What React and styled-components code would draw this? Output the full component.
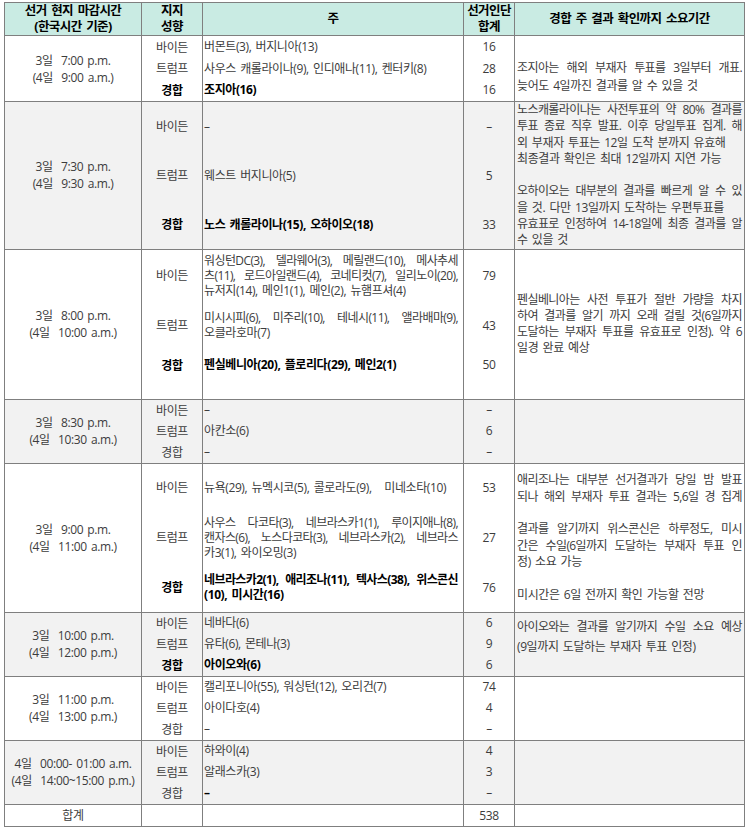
import React from "react";
import styled, { createGlobalStyle } from "styled-components";

/*Election-night closing-time table: one group per poll-closing slot, each
  split into Biden / Trump / swing sub-rows, with a merged note column.*/

const LINE = "#7f7f7f";
const SHADE = "#f2f2f2";
const HEAD = "#c9ebe3";
const TEXT = "#3c3c3c";

const GlobalStyle = createGlobalStyle`
    body {
        margin: 0;
        background: #fff;
        font-family: "Open Sans", "Noto Sans CJK KR", sans-serif;
        color: ${TEXT};
    }
`;

const Page = styled.div`
    padding: 2px 0 0 4px;
`;

//latin glyphs come from Open Sans, hangul from Noto Sans CJK KR
const Table = styled.table`
    border-collapse: collapse;
    table-layout: fixed;
    width: 740px;
    font-family: "Open Sans", "Noto Sans CJK KR", sans-serif;
    font-size: 12px;
    letter-spacing: -0.4px;
    word-spacing: 1.5px;
`;

const HeadCell = styled.th`
    background: ${HEAD};
    border: 1px solid ${LINE};
    height: 31px;
    padding: 0;
    font-size: 12.5px;
    font-weight: 700;
    color: #000;
    line-height: 16px;
    letter-spacing: -0.6px;
    word-spacing: 2px;
    text-align: center;
    vertical-align: middle;
`;

const Row = styled.tr`
    height: ${props => props.$h}px;
    background: ${props => props.$shade ? SHADE : "#fff"};
`;

/*merged cells (time + note) carry the full group border*/
const GroupCell = styled.td`
    border: 1px solid ${LINE};
    padding: ${props => props.$pad || "0 2px"};
    vertical-align: ${props => props.$valign || "middle"};
`;

const TimeCell = styled(GroupCell)`
    text-align: center;
    line-height: 17px;
    white-space: pre;
`;

const NoteCell = styled(GroupCell)`
    line-height: ${props => props.$lh || 16.3}px;
`;

/*each source line is its own block; full lines are spread edge to edge
  (tighter natural spacing so they never overflow before justifying)*/
const TextLine = styled.div`
    text-align: justify;
    text-align-last: ${props => props.$fill ? "justify" : "left"};
    letter-spacing: ${props => props.$fill ? "-0.6px" : "inherit"};
    word-spacing: ${props => props.$fill ? "0" : "inherit"};
    white-space: pre;
`;

/*sub-row cells: only the group's outer edges get horizontal rules*/
const SubCell = styled.td`
    border-left: 1px solid ${LINE};
    border-right: 1px solid ${LINE};
    border-top: ${props => props.$first ? `1px solid ${LINE}` : "none"};
    border-bottom: ${props => props.$last ? `1px solid ${LINE}` : "none"};
    padding: 0 1px ${props => props.$lift || 0}px;
    vertical-align: middle;
    font-weight: ${props => props.$bold ? 700 : 400};
    color: ${props => props.$bold ? "#000" : TEXT};
`;

const SideCell = styled(SubCell)`
    text-align: center;
`;

const StateCell = styled(SubCell)`
    text-align: left;
    line-height: 15px;
    padding-right: 5px;
`;

const VoteCell = styled(SubCell)`
    text-align: center;
`;

const GROUPS = [
    {
        time: ["3일  7:00 p.m.", "(4일  9:00 a.m.)"],
        shade: false,
        rows: [
            { h: 22, side: "바이든", states: ["버몬트(3), 버지니아(13)"], votes: "16" },
            { h: 21, side: "트럼프", states: ["사우스 캐롤라이나(9), 인디애나(11), 켄터키(8)"], votes: "28" },
            { h: 23, side: "경합", bold: true, states: ["조지아(16)"], votes: "16" },
        ],
        note: {
            lh: 17.5, pad: "16px 2px 0",
            lines: [["조지아는 해외 부재자 투표를 3일부터 개표.", true], ["늦어도 4일까진 결과를 알 수 있을 것"]],
        },
    },
    {
        time: ["3일  7:30 p.m.", "(4일  9:30 a.m.)"],
        shade: true,
        rows: [
            { h: 49, side: "바이든", states: ["–"], votes: "–" },
            { h: 49, side: "트럼프", states: ["웨스트 버지니아(5)"], votes: "5" },
            { h: 49, side: "경합", bold: true, states: ["노스 캐롤라이나(15), 오하이오(18)"], votes: "33" },
        ],
        note: {
            valign: "top", pad: "0 2px",
            lines: [
                ["노스캐롤라이나는 사전투표의 약 80% 결과를", true],
                ["투표 종료 직후 발표. 이후 당일투표 집계. 해", true],
                ["외 부재자 투표는 12일 도착 분까지 유효해"],
                ["최종결과 확인은 최대 12일까지 지연 가능"],
                [" "],
                ["오하이오는 대부분의 결과를 빠르게 알 수 있", true],
                ["을 것. 다만 13일까지 도착하는 우편투표를"],
                ["유효표로 인정하여 14-18일에 최종 결과를 알", true],
                ["수 있을 것"],
            ],
        },
    },
    {
        time: ["3일  8:00 p.m.", "(4일  10:00 a.m.)"],
        shade: false,
        rows: [
            {
                h: 52, side: "바이든", votes: "79",
                states: [
                    "워싱턴DC(3), 델라웨어(3), 메릴랜드(10), 메사추세",
                    "츠(11), 로드아일랜드(4), 코네티컷(7), 일리노이(20),",
                    "뉴저지(14), 메인1(1), 메인(2), 뉴햄프셔(4)",
                ],
            },
            {
                h: 48, side: "트럼프", votes: "43",
                states: ["미시시피(6), 미주리(10), 테네시(11), 앨라배마(9),", "오클라호마(7)"],
            },
            { h: 50, lift: 18, side: "경합", bold: true, states: ["펜실베니아(20), 플로리다(29), 메인2(1)"], votes: "50" },
        ],
        note: {
            lines: [
                ["펜실베니아는 사전 투표가 절반 가량을 차지", true],
                ["하여 결과를 알기 까지 오래 걸릴 것(6일까지", true],
                ["도달하는 부재자 투표를 유효표로 인정). 약 6", true],
                ["일경 완료 예상"],
            ],
        },
    },
    {
        time: ["3일  8:30 p.m.", "(4일  10:30 a.m.)"],
        shade: true,
        rows: [
            { h: 21, side: "바이든", states: ["–"], votes: "–" },
            { h: 21, side: "트럼프", states: ["아칸소(6)"], votes: "6" },
            { h: 22, side: "경합", states: ["–"], votes: "–" },
        ],
        note: { lines: [] },
    },
    {
        time: ["3일  9:00 p.m.", "(4일  11:00 a.m.)"],
        shade: false,
        rows: [
            { h: 48, side: "바이든", states: ["뉴욕(29), 뉴멕시코(5), 콜로라도(9),   미네소타(10)"], votes: "53" },
            {
                h: 52, side: "트럼프", votes: "27",
                states: [
                    "사우스 다코타(3), 네브라스카1(1), 루이지애나(8),",
                    "캔자스(6), 노스다코타(3), 네브라스카(2), 네브라스",
                    "카3(1), 와이오밍(3)",
                ],
            },
            {
                h: 49, side: "경합", bold: true, votes: "76",
                states: ["네브라스카2(1), 애리조나(11), 텍사스(38), 위스콘신", "(10), 미시간(16)"],
            },
        ],
        note: {
            lines: [
                ["애리조나는 대부분 선거결과가 당일 밤 발표", true],
                ["되나 해외 부재자 투표 결과는 5,6일 경 집계", true],
                [" "],
                ["결과를 알기까지 위스콘신은 하루정도, 미시", true],
                ["간은 수일(6일까지 도달하는 부재자 투표 인", true],
                ["정) 소요 가능"],
                [" "],
                ["미시간은 6일 전까지 확인 가능할 전망"],
            ],
        },
    },
    {
        time: ["3일  10:00 p.m.", "(4일  12:00 p.m.)"],
        shade: true,
        rows: [
            { h: 21, side: "바이든", states: ["네바다(6)"], votes: "6" },
            { h: 21, side: "트럼프", states: ["유타(6), 몬테나(3)"], votes: "9" },
            { h: 22, side: "경합", bold: true, states: ["아이오와(6)"], votes: "6" },
        ],
        note: {
            lh: 20, pad: "0 2px 14px",
            lines: [["아이오와는 결과를 알기까지 수일 소요 예상", true], ["(9일까지 도달하는 부재자 투표 인정)"]],
        },
    },
    {
        time: ["3일  11:00 p.m.", "(4일  13:00 p.m.)"],
        shade: false,
        rows: [
            { h: 21, side: "바이든", states: ["캘리포니아(55), 워싱턴(12), 오리건(7)"], votes: "74" },
            { h: 21, side: "트럼프", states: ["아이다호(4)"], votes: "4" },
            { h: 22, side: "경합", states: ["–"], votes: "–" },
        ],
        note: { lines: [] },
    },
    {
        time: ["4일  00:00- 01:00 a.m.", "(4일  14:00~15:00 p.m.)"],
        shade: true,
        rows: [
            { h: 21, side: "바이든", states: ["하와이(4)"], votes: "4" },
            { h: 21, side: "트럼프", states: ["알래스카(3)"], votes: "3" },
            { h: 22, side: "경합", boldStates: true, states: ["–"], votes: "–" },
        ],
        note: { lines: [] },
    },
];

const renderGroup = (group, gi) => group.rows.map((row, ri) => {
    const first = ri === 0;
    const last = ri === group.rows.length - 1;
    const { note } = group;
    return (
        <Row key={`g${gi}-r${ri}`} $h={row.h} $shade={group.shade}>
            {first && (
                <TimeCell rowSpan={group.rows.length}>
                    {group.time.map((t, i) => <div key={i}>{t}</div>)}
                </TimeCell>
            )}
            <SideCell $first={first} $last={last} $bold={row.bold} $lift={row.lift}>{row.side}</SideCell>
            <StateCell $first={first} $last={last} $bold={row.bold || row.boldStates} $lift={row.lift}>
                {row.states.map((s, i) => (
                    <TextLine key={i} $fill={i < row.states.length - 1}>{s}</TextLine>
                ))}
            </StateCell>
            <VoteCell $first={first} $last={last} $lift={row.lift}>{row.votes}</VoteCell>
            {first && (
                <NoteCell rowSpan={group.rows.length} $lh={note.lh} $pad={note.pad} $valign={note.valign}>
                    {note.lines.map(([text, fill], i) => <TextLine key={i} $fill={fill}>{text}</TextLine>)}
                </NoteCell>
            )}
        </Row>
    );
});

export default function App() {
    return (
        <Page>
            <GlobalStyle />
            <Table>
                <colgroup>
                    <col style={{ width: 137 }} />
                    <col style={{ width: 61 }} />
                    <col style={{ width: 261 }} />
                    <col style={{ width: 51 }} />
                    <col style={{ width: 230 }} />
                </colgroup>
                <thead>
                    <tr>
                        <HeadCell>선거 현지 마감시간<br />(한국시간 기준)</HeadCell>
                        <HeadCell>지지<br />성향</HeadCell>
                        <HeadCell>주</HeadCell>
                        <HeadCell>선거인단<br />합계</HeadCell>
                        <HeadCell>경합 주 결과 확인까지 소요기간</HeadCell>
                    </tr>
                </thead>
                <tbody>
                    {GROUPS.map(renderGroup)}
                    <Row $h={22}>
                        <TimeCell>합계</TimeCell>
                        <SideCell $first $last />
                        <StateCell $first $last />
                        <VoteCell $first $last>538</VoteCell>
                        <NoteCell />
                    </Row>
                </tbody>
            </Table>
        </Page>
    );
}
